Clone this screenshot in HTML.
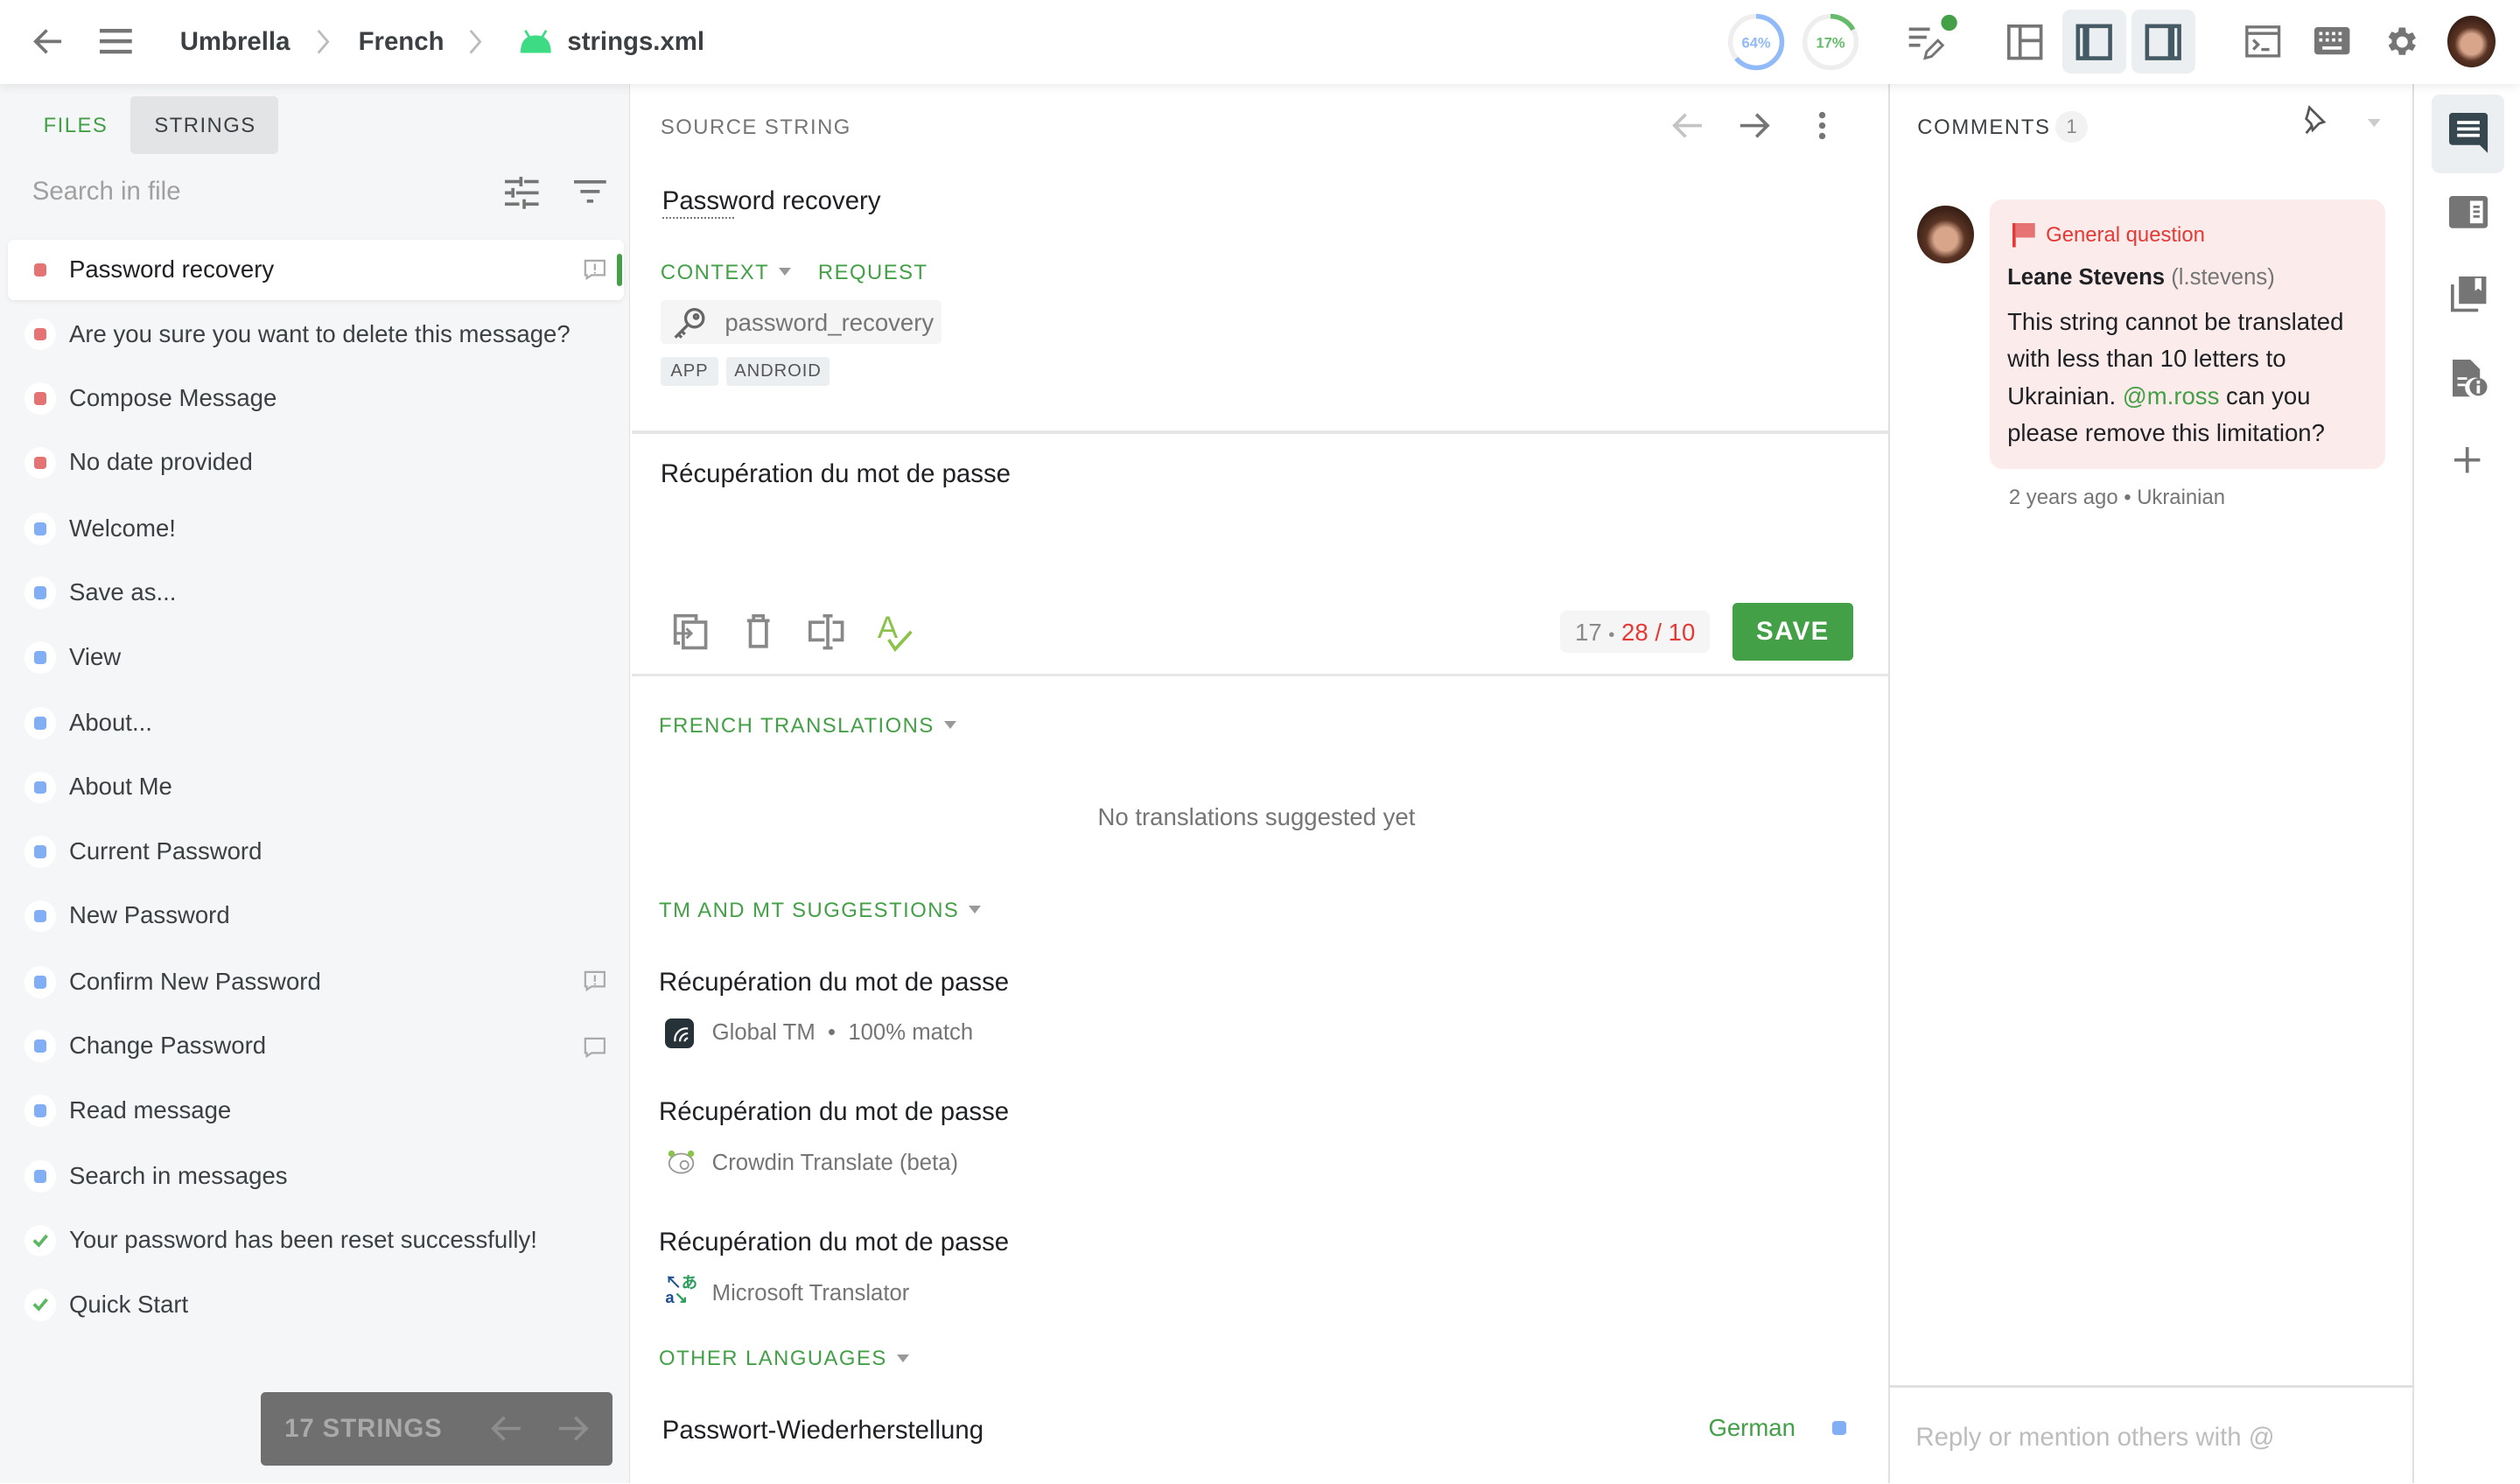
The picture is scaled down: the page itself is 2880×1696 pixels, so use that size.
<!DOCTYPE html>
<html><head><meta charset="utf-8"><style>
*{box-sizing:border-box;margin:0;padding:0}
html,body{width:2880px;height:1696px;overflow:hidden;background:#fff}
#r{zoom:1.8367347;width:1568px;height:923px;position:relative;font-family:"Liberation Sans",Arial,sans-serif;color:#3c4043;overflow:hidden}
.a{position:absolute;white-space:nowrap}
.g{color:#43a047}
.cap{font-size:13px;letter-spacing:.8px;text-transform:uppercase}
.cap b{display:inline-block;width:0;height:0;border-left:4px solid transparent;border-right:4px solid transparent;border-top:5px solid #999;margin-left:6px;vertical-align:2px}
svg{position:absolute;overflow:visible}
.li{position:absolute;left:0;width:392px;height:40px;font-size:15px}
.li .d{position:absolute;left:15px;top:10px;width:20px;height:20px;border-radius:50%;background:#fff}
.li .d i{position:absolute;left:6px;top:6px;width:8px;height:8px;border-radius:2px}
.li span{position:absolute;left:43px;top:11px}
.red i{background:#e57373}.blue i{background:#82aef5}
</style></head><body><div id="r">
<!-- header -->
<div class="a" style="left:0;top:0;width:1568px;height:52px;background:#fff;box-shadow:0 2px 6px rgba(0,0,0,.08);z-index:2">
<svg style="left:20px;top:16px" width="20" height="20" viewBox="0 0 20 20" fill="none" stroke="#757575" stroke-width="2"><path d="M18 10H3M9 3L2 10l7 7"/></svg>
<svg style="left:62px;top:18px" width="20" height="16" fill="#757575"><rect y="0" width="20" height="2.4"/><rect y="6.5" width="20" height="2.4"/><rect y="13" width="20" height="2.4"/></svg>
<div class="a" style="left:112px;top:17px;font-size:16px;font-weight:bold;color:#3c4043">Umbrella</div>
<svg style="left:196px;top:18px" width="10" height="16" fill="none" stroke="#bbb" stroke-width="1.5"><path d="M2 1l6 7-6 7"/></svg>
<div class="a" style="left:223px;top:17px;font-size:16px;font-weight:bold">French</div>
<svg style="left:291px;top:18px" width="10" height="16" fill="none" stroke="#bbb" stroke-width="1.5"><path d="M2 1l6 7-6 7"/></svg>
<svg style="left:323px;top:18px" width="21" height="16" viewBox="0 0 21 16"><path d="M1 15 Q1 4 10.5 4 Q20 4 20 15Z" fill="#3ddc84"/><path d="M4 1l3 5M17 1l-3 5" stroke="#3ddc84" stroke-width="1.5"/></svg>
<div class="a" style="left:353px;top:17px;font-size:16px;font-weight:bold">strings.xml</div>
<svg style="left:1075px;top:8px" width="36" height="36"><circle cx="18" cy="18" r="16" fill="none" stroke="#eee" stroke-width="3"/><circle cx="18" cy="18" r="16" fill="none" stroke="#90baf9" stroke-width="3" stroke-dasharray="64.3 100.5" transform="rotate(-90 18 18)"/><text x="18" y="21.5" text-anchor="middle" font-size="9" font-weight="bold" fill="#90baf9" font-family="Liberation Sans">64%</text></svg>
<svg style="left:1121px;top:8px" width="36" height="36"><circle cx="18" cy="18" r="16" fill="none" stroke="#eee" stroke-width="3"/><circle cx="18" cy="18" r="16" fill="none" stroke="#66bb6a" stroke-width="3" stroke-dasharray="17 100.5" transform="rotate(-90 18 18)"/><text x="18" y="21.5" text-anchor="middle" font-size="9" font-weight="bold" fill="#66bb6a" font-family="Liberation Sans">17%</text></svg>
<svg style="left:1186px;top:8px" width="36" height="30" fill="#757575"><rect x="2" y="9" width="13" height="2"/><rect x="2" y="14" width="11" height="2"/><rect x="2" y="19" width="7" height="2"/><path d="M12 28l1-4 7-7 3 3-7 7z" fill="none" stroke="#757575" stroke-width="1.6"/><circle cx="27" cy="6" r="5" fill="#43a047"/></svg>
<svg style="left:1249px;top:15px" width="22" height="22" fill="none" stroke="#757575" stroke-width="2"><rect x="1" y="1" width="20" height="20"/><path d="M8 1v20M8 10h13"/></svg>
<div class="a" style="left:1283px;top:6px;width:40px;height:40px;border-radius:5px;background:#eceff1"></div>
<svg style="left:1292px;top:15px" width="22" height="22" fill="none" stroke="#455a64" stroke-width="2.5"><rect x="1" y="1" width="20" height="20"/><path d="M6 1v20" stroke-width="4"/></svg>
<div class="a" style="left:1326px;top:6px;width:40px;height:40px;border-radius:5px;background:#eceff1"></div>
<svg style="left:1335px;top:15px" width="22" height="22" fill="none" stroke="#455a64" stroke-width="2.5"><rect x="1" y="1" width="20" height="20"/><path d="M16 1v20" stroke-width="4"/></svg>
<svg style="left:1397px;top:16px" width="22" height="20" fill="none" stroke="#757575" stroke-width="1.8"><rect x="1" y="1" width="20" height="18"/><path d="M1 5h20M5 9l3 3-3 3M10 15h5"/></svg>
<svg style="left:1440px;top:17px" width="22" height="17"><rect width="22" height="17" rx="2" fill="#757575"/><g fill="#fff"><rect x="3" y="3" width="2" height="2"/><rect x="7" y="3" width="2" height="2"/><rect x="11" y="3" width="2" height="2"/><rect x="15" y="3" width="2" height="2"/><rect x="3" y="7" width="2" height="2"/><rect x="7" y="7" width="2" height="2"/><rect x="11" y="7" width="2" height="2"/><rect x="15" y="7" width="2" height="2"/><rect x="5" y="12" width="12" height="2"/></g></svg>
<svg style="left:1482px;top:14px" width="24" height="24" viewBox="0 0 24 24"><path fill="#757575" d="M19.1 12.9a7 7 0 000-1.8l2.1-1.6-2-3.5-2.5 1a7 7 0 00-1.6-.9L14.7 3h-4l-.4 2.6c-.6.2-1.1.5-1.6.9l-2.5-1-2 3.5 2.1 1.6a7 7 0 000 1.8l-2.1 1.6 2 3.5 2.5-1c.5.4 1 .7 1.6.9l.4 2.6h4l.4-2.6c.6-.2 1.1-.5 1.6-.9l2.5 1 2-3.5zM12.7 15.5a3.5 3.5 0 110-7 3.5 3.5 0 010 7z"/></svg>
<div class="a" style="left:1523px;top:10px;width:30px;height:32px;border-radius:50%;background:radial-gradient(circle at 50% 55%,#d8a58a 0 28%,#5a3424 45%,#3a2016 70%)"></div>
</div>
<!-- left panel -->
<div class="a" style="left:0;top:52px;width:392px;height:871px;background:#f5f6f7;border-right:1px solid #e0e0e0">
<div class="a cap" style="left:27px;top:19px;color:#43a047">Files</div>
<div class="a" style="left:81px;top:8px;width:92px;height:36px;border-radius:3px;background:#e3e4e6"></div>
<div class="a cap" style="left:96px;top:19px;color:#3c4043">Strings</div>
<div class="a" style="left:20px;top:58px;font-size:16px;color:#a0a0a0">Search in file</div>
<svg style="left:314px;top:58px" width="21" height="21" fill="#757575"><rect x="0" y="2" width="9" height="2"/><rect x="12" y="2" width="9" height="2"/><rect x="9" y="0" width="2" height="6"/><rect x="0" y="9" width="4" height="2"/><rect x="7" y="9" width="14" height="2"/><rect x="4" y="7" width="2" height="6"/><rect x="0" y="16" width="9" height="2"/><rect x="12" y="16" width="9" height="2"/><rect x="11" y="14" width="2" height="6"/></svg>
<svg style="left:357px;top:60px" width="20" height="16" fill="#757575"><rect x="0" y="0" width="20" height="2"/><rect x="4" y="6" width="12" height="2"/><rect x="8" y="12" width="4" height="2"/></svg>
</div>
<div class="a" style="left:5px;top:149px;width:383px;height:38px;background:#fff;border-radius:4px;box-shadow:0 1px 3px rgba(0,0,0,.06)"></div>
<div class="a" style="left:384px;top:158px;width:3px;height:20px;background:#43a047;border-radius:2px"></div>
<div class="li red" style="top:148px"><div class="d"><i></i></div><span style="color:#202124">Password recovery</span></div>
<svg style="left:363px;top:161px" width="14" height="13" fill="none" stroke="#aaa" stroke-width="1.2"><path d="M1 1h12v9H5l-3 2V10H1z"/><path d="M7 3v4M7 8v1"/></svg>
<div class="li red" style="top:188px"><div class="d"><i></i></div><span>Are you sure you want to delete this message?</span></div>
<div class="li red" style="top:228px"><div class="d"><i></i></div><span>Compose Message</span></div>
<div class="li red" style="top:268px"><div class="d"><i></i></div><span>No date provided</span></div>
<div class="li blue" style="top:309px"><div class="d"><i></i></div><span>Welcome!</span></div>
<div class="li blue" style="top:349px"><div class="d"><i></i></div><span>Save as...</span></div>
<div class="li blue" style="top:389px"><div class="d"><i></i></div><span>View</span></div>
<div class="li blue" style="top:430px"><div class="d"><i></i></div><span>About...</span></div>
<div class="li blue" style="top:470px"><div class="d"><i></i></div><span>About Me</span></div>
<div class="li blue" style="top:510px"><div class="d"><i></i></div><span>Current Password</span></div>
<div class="li blue" style="top:550px"><div class="d"><i></i></div><span>New Password</span></div>
<div class="li blue" style="top:591px"><div class="d"><i></i></div><span>Confirm New Password</span></div>
<svg style="left:363px;top:604px" width="14" height="13" fill="none" stroke="#aaa" stroke-width="1.2"><path d="M1 1h12v9H5l-3 2V10H1z"/><path d="M7 3v4M7 8v1"/></svg>
<div class="li blue" style="top:631px"><div class="d"><i></i></div><span>Change Password</span></div>
<svg style="left:363px;top:645px" width="14" height="13" fill="none" stroke="#aaa" stroke-width="1.2"><path d="M1 1h12v9H5l-3 2V10H1z"/></svg>
<div class="li blue" style="top:671px"><div class="d"><i></i></div><span>Read message</span></div>
<div class="li blue" style="top:712px"><div class="d"><i></i></div><span>Search in messages</span></div>
<div class="li" style="top:752px"><div class="d"><svg style="left:5px;top:6px" width="10" height="8" fill="none" stroke="#5cb860" stroke-width="2"><path d="M1 3.5l3 3 5-6"/></svg></div><span>Your password has been reset successfully!</span></div>
<div class="li" style="top:792px"><div class="d"><svg style="left:5px;top:6px" width="10" height="8" fill="none" stroke="#5cb860" stroke-width="2"><path d="M1 3.5l3 3 5-6"/></svg></div><span>Quick Start</span></div>
<div class="a" style="left:162px;top:866px;width:219px;height:46px;border-radius:3px;background:#6f6f6f"></div>
<div class="a" style="left:177px;top:880px;font-size:16px;font-weight:bold;color:#a9a9a9;letter-spacing:.5px">17 STRINGS</div>
<svg style="left:305px;top:880px" width="20" height="18" fill="none" stroke="#8d8d8d" stroke-width="2"><path d="M19 9H3M9 2L2 9l7 7"/></svg>
<svg style="left:347px;top:880px" width="20" height="18" fill="none" stroke="#8d8d8d" stroke-width="2"><path d="M1 9h16M11 2l7 7-7 7"/></svg>
<!-- middle -->
<div class="a" style="left:1175px;top:52px;width:1px;height:871px;background:#e0e0e0"></div>
<div class="a cap" style="left:411px;top:72px;color:#757575">Source string</div>
<svg style="left:1040px;top:69px" width="20" height="18" fill="none" stroke="#c4c4c4" stroke-width="2"><path d="M19 9H3M9 2L2 9l7 7"/></svg>
<svg style="left:1082px;top:69px" width="20" height="18" fill="none" stroke="#757575" stroke-width="2"><path d="M1 9h16M11 2l7 7-7 7"/></svg>
<svg style="left:1131px;top:69px" width="6" height="18" fill="#757575"><circle cx="3" cy="2.5" r="2"/><circle cx="3" cy="9" r="2"/><circle cx="3" cy="15.5" r="2"/></svg>
<div class="a" style="left:412px;top:116px;font-size:16px;color:#202124">Password recovery</div>
<div class="a" style="left:412px;top:135px;width:45px;border-top:1.5px dotted #777"></div>
<div class="a cap g" style="left:411px;top:162px">Context<b></b></div>
<div class="a cap g" style="left:509px;top:162px">Request</div>
<div class="a" style="left:411px;top:187px;width:175px;height:27px;background:#f5f5f5;border-radius:3px"></div>
<svg style="left:418px;top:190px" width="22" height="22" fill="none" stroke="#666" stroke-width="1.8"><circle cx="14" cy="8" r="5.5"/><circle cx="15" cy="7" r="1.2"/><path d="M10 12l-8 8M4 18l2 2M6 16l2 2"/></svg>
<div class="a" style="left:451px;top:192px;font-size:15px;color:#757575">password_recovery</div>
<div class="a" style="left:411px;top:222px;width:36px;height:18px;background:#eceff1;border-radius:2px;font-size:11px;letter-spacing:.5px;color:#555;text-align:center;line-height:18px">APP</div>
<div class="a" style="left:452px;top:222px;width:64px;height:18px;background:#eceff1;border-radius:2px;font-size:11px;letter-spacing:.5px;color:#555;text-align:center;line-height:18px">ANDROID</div>
<div class="a" style="left:393px;top:268px;width:782px;height:2px;background:#e6e6e6"></div>
<div class="a" style="left:411px;top:286px;font-size:16px;color:#202124">Récupération du mot de passe</div>
<svg style="left:418px;top:381px" width="24" height="24" fill="none" stroke="#888" stroke-width="2"><path d="M5 19H2V2h13v3"/><rect x="7" y="6" width="14" height="16"/><path d="M3 13h9M9 10l3 3-3 3" stroke-width="1.6"/></svg>
<svg style="left:464px;top:382px" width="16" height="22" fill="none" stroke="#888" stroke-width="2"><path d="M1 4h14M5 4V1h6v3M3 5v15h10V5"/></svg>
<svg style="left:503px;top:382px" width="24" height="22" fill="none" stroke="#888" stroke-width="2"><path d="M10 5H1v11h9M15 5h6v11h-6M12 1v20M9 1h6M9 21h6"/></svg>
<div class="a" style="left:546px;top:380px;font-size:19px;color:#8bc34a">A</div>
<svg style="left:551px;top:392px" width="18" height="14" fill="none" stroke="#8bc34a" stroke-width="2"><path d="M2 6l4 6L16 1"/></svg>
<div class="a" style="left:971px;top:380px;width:93px;height:26px;background:#f5f5f5;border-radius:4px"></div>
<div class="a" style="left:980px;top:385px;font-size:15px;color:#8a8a8a">17 <span style="font-size:11px">•</span> <span style="color:#e53935">28 / 10</span></div>
<div class="a" style="left:1078px;top:375px;width:75px;height:36px;background:#43a047;border-radius:3px;color:#fff;font-weight:bold;font-size:16px;text-align:center;line-height:36px;letter-spacing:.8px">SAVE</div>
<div class="a" style="left:393px;top:419px;width:782px;height:2px;background:#e6e6e6"></div>
<div class="a cap g" style="left:410px;top:444px">French translations<b></b></div>
<div class="a" style="left:683px;top:500px;font-size:15px;color:#757575">No translations suggested yet</div>
<div class="a cap g" style="left:410px;top:559px">TM and MT suggestions<b></b></div>
<div class="a" style="left:410px;top:602px;font-size:16px;color:#202124">Récupération du mot de passe</div>
<div class="a" style="left:414px;top:634px;width:18px;height:18px;border-radius:4px;background:#263238"></div>
<svg style="left:417px;top:637px" width="12" height="12" fill="none" stroke="#fff" stroke-width="1.2"><path d="M11 3A7 7 0 003 11M11 6A5 5 0 006 11M11 9a2 2 0 00-2 2"/></svg>
<div class="a" style="left:443px;top:635px;font-size:14px;color:#757575">Global TM &nbsp;•&nbsp; 100% match</div>
<div class="a" style="left:410px;top:683px;font-size:16px;color:#202124">Récupération du mot de passe</div>
<svg style="left:415px;top:715px" width="18" height="16" fill="none" stroke="#999" stroke-width="1"><ellipse cx="9" cy="9" rx="7.5" ry="6"/><circle cx="11" cy="10" r="2.5"/><circle cx="3" cy="3" r="2" fill="#8bc34a" stroke="none"/><circle cx="15" cy="3" r="2" fill="#8bc34a" stroke="none"/></svg>
<div class="a" style="left:443px;top:716px;font-size:14px;color:#757575">Crowdin Translate (beta)</div>
<div class="a" style="left:410px;top:764px;font-size:16px;color:#202124">Récupération du mot de passe</div>
<div class="a" style="left:414px;top:794px;font-size:10px;line-height:9px;font-weight:bold"><span style="color:#1e4f91">↖</span><span style="color:#2a9d5b">あ</span><br><span style="color:#1e4f91">a</span><span style="color:#2a9d5b">↘</span></div>
<div class="a" style="left:443px;top:797px;font-size:14px;color:#757575">Microsoft Translator</div>
<div class="a cap g" style="left:410px;top:838px">Other languages<b></b></div>
<div class="a" style="left:412px;top:881px;font-size:16px;color:#202124">Passwort-Wiederherstellung</div>
<div class="a g" style="left:1063px;top:880px;font-size:15px">German</div>
<div class="a" style="left:1140px;top:884px;width:9px;height:9px;border-radius:2px;background:#82aef5"></div>
<!-- comments -->
<div class="a" style="left:1501px;top:52px;width:1px;height:871px;background:#e0e0e0"></div>
<div class="a" style="left:1193px;top:72px;font-size:13px;letter-spacing:.9px;color:#3c4043">COMMENTS</div>
<div class="a" style="left:1279px;top:69px;width:20px;height:20px;border-radius:50%;background:#f2f2f2;font-size:12px;color:#888;text-align:center;line-height:20px">1</div>
<svg style="left:1433px;top:66px" width="16" height="18" fill="none" stroke="#555" stroke-width="1.5"><path d="M4 1l9 9-3 1-4 4-1-4L2 8l1-3z"/><path d="M6 12l-4 5"/></svg>
<svg style="left:1473px;top:74px" width="8" height="5" fill="#ccc"><path d="M0 0h8L4 5z"/></svg>
<div class="a" style="left:1193px;top:128px;width:35px;height:36px;border-radius:50%;background:radial-gradient(circle at 50% 58%,#d8a58a 0 26%,#5a3424 44%,#3a2016 70%)"></div>
<div class="a" style="left:1238px;top:124px;width:246px;height:168px;border-radius:8px;background:#fbebeb"></div>
<svg style="left:1252px;top:139px" width="14" height="15" fill="#e57373"><rect x="0" y="0" width="2" height="15" fill="#e53935"/><path d="M2 0h12v9H2z"/></svg>
<div class="a" style="left:1273px;top:139px;font-size:13px;color:#e53935">General question</div>
<div class="a" style="left:1249px;top:165px;font-size:14px;color:#202124"><b style="font-weight:bold">Leane Stevens</b> <span style="color:#757575">(l.stevens)</span></div>
<div class="a" style="left:1249px;top:189px;font-size:15px;line-height:23px;color:#202124;white-space:normal;width:230px">This string cannot be translated with less than 10 letters to Ukrainian. <span class="g">@m.ross</span> can you please remove this limitation?</div>
<div class="a" style="left:1250px;top:302px;font-size:13px;color:#757575">2 years ago • Ukrainian</div>
<div class="a" style="left:1176px;top:862px;width:325px;height:1.5px;background:#e0e0e0"></div>
<div class="a" style="left:1192px;top:885px;font-size:16px;color:#bdbdbd">Reply or mention others with @</div>
<!-- right rail -->
<div class="a" style="left:1513px;top:59px;width:45px;height:49px;border-radius:5px;background:#eceff1"></div>
<svg style="left:1524px;top:70px" width="24" height="25" fill="#37474f"><path d="M0 2a2 2 0 012-2h20a2 2 0 012 2v16h0v7l-5-5H2a2 2 0 01-2-2z"/><g fill="#fff"><rect x="5" y="5" width="14" height="2"/><rect x="5" y="9" width="14" height="2"/><rect x="5" y="13" width="14" height="2"/></g></svg>
<svg style="left:1524px;top:122px" width="24" height="20" fill="#757575"><rect width="24" height="20" rx="2"/><g fill="#fff"><rect x="13" y="3" width="8" height="14"/></g><g fill="#757575"><rect x="15" y="6" width="4" height="1.5"/><rect x="15" y="9" width="4" height="1.5"/><rect x="15" y="12" width="4" height="1.5"/></g></svg>
<svg style="left:1525px;top:172px" width="22" height="22" fill="#757575"><path d="M5 0h17v17H5z"/><path d="M0 5h2v15h15v2H0z"/><path d="M15 1h4v8l-2-1.5L15 9z" fill="#fff"/></svg>
<svg style="left:1526px;top:224px" width="22" height="24" fill="#757575"><path d="M0 0h11l6 6v6a6 6 0 00-6 11H0z"/><circle cx="16" cy="17" r="5.5"/><rect x="15" y="16" width="2" height="5" fill="#fff"/><rect x="15" y="13" width="2" height="2" fill="#fff"/><g fill="#fff"><rect x="3" y="11" width="6" height="1.5"/><rect x="3" y="15" width="5" height="1.5"/></g></svg>
<svg style="left:1527px;top:278px" width="16" height="16" fill="#757575"><rect x="7" y="0" width="2" height="16"/><rect x="0" y="7" width="16" height="2"/></svg>
</div></body></html>
